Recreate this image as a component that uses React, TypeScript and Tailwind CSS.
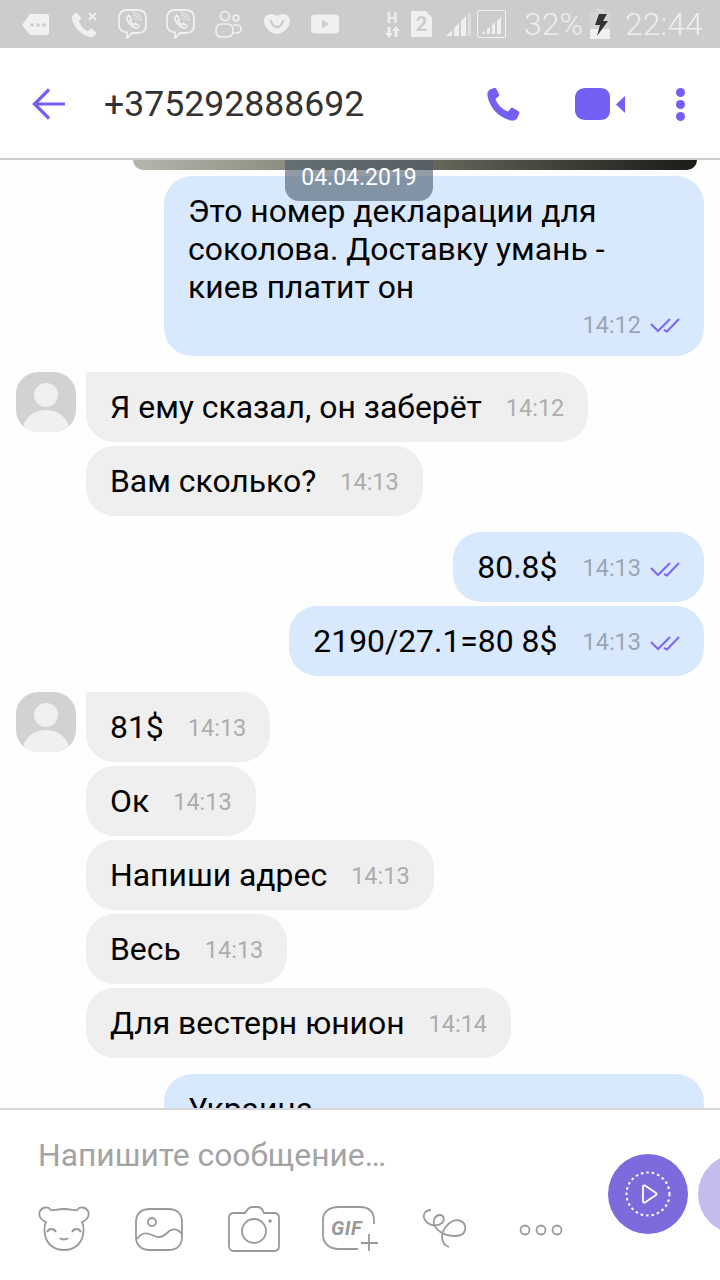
const PURPLE = "#7360f2";

type Msg = { from: "me" | "them"; text: string; time: string; avatar?: boolean; gap?: boolean };

const messages: Msg[] = [
  { from: "them", text: "Я ему сказал, он заберёт", time: "14:12", avatar: true, gap: true },
  { from: "them", text: "Вам сколько?", time: "14:13" },
  { from: "me", text: "80.8$", time: "14:13", gap: true },
  { from: "me", text: "2190/27.1=80 8$", time: "14:13" },
  { from: "them", text: "81$", time: "14:13", avatar: true, gap: true },
  { from: "them", text: "Ок", time: "14:13" },
  { from: "them", text: "Напиши адрес", time: "14:13" },
  { from: "them", text: "Весь", time: "14:13" },
  { from: "them", text: "Для вестерн юнион", time: "14:14" },
];

function Checks() {
  return (
    <svg width="30" height="16" viewBox="0 0 30 16" fill="none" stroke="#8068f4" strokeWidth="2.200" className="shrink-0">
      <path d="M1 7l7 7L20 2" />
      <path d="M14 13l3 1.500L29 2" />
    </svg>
  );
}

function ViberOutline() {
  return (
    <svg width="29" height="30" viewBox="0 0 29 30" fill="none" stroke="#f0f0f0" strokeWidth="1.8">
      <path d="M9 1h11c5 0 8 3 8 8v7c0 5-3 8-8 8h-6l-5 5v-5.500C4 23 1 20 1 16V9c0-5 3-8 8-8z" />
      <path d="M9 8l2-1.500 2.500 3.500-1.500 1.500c.5 2 2 3.500 4 4.500l1.500-1.500 3.500 2.500-1.500 2c-5 .5-11-6-10.500-11z" strokeWidth="1.600" />
      <path d="M15 6c3 0 5.500 2.500 5.500 5.500M15.500 9c1.500 0 2.500 1 2.500 2.500M15 3.500c4.500 0 8 3.500 8 8" strokeWidth="1" />
    </svg>
  );
}

function StatusBar() {
  return (
    <div className="h-12 shrink-0 bg-[#cccccc] flex items-center pl-[22px] text-[#eeeeee]">
      <svg width="27" height="21" viewBox="0 0 27 21" className="shrink-0">
        <path d="M8 0h17a2 2 0 0 1 2 2v17a2 2 0 0 1-2 2H8L0 11z" fill="#f0f0f0" />
        <circle cx="10" cy="11" r="1.800" fill="#cccccc" />
        <circle cx="16" cy="11" r="1.800" fill="#cccccc" />
        <circle cx="22" cy="11" r="1.800" fill="#cccccc" />
      </svg>
      <svg width="27" height="27" viewBox="0 0 27 27" fill="none" className="ml-[22px] shrink-0">
        <path d="M4 2L1 5c-1 9 11 22 21 21l3-3c.5-.5.5-1.500 0-2l-5-3.500-3 2.500c-4-1-8-6-9-10l2.500-2.500L6 2c-.5-.5-1.500-.5-2 0z" fill="#f0f0f0" />
        <path d="M18 2l7 7M25 2l-7 7" stroke="#f0f0f0" strokeWidth="1.800" />
      </svg>
      <div className="ml-[20px] shrink-0 flex"><ViberOutline /></div>
      <div className="ml-[19px] shrink-0 flex"><ViberOutline /></div>
      <svg width="27" height="28" viewBox="0 0 27 28" fill="none" stroke="#f0f0f0" strokeWidth="1.700" className="ml-[20px] shrink-0">
        <circle cx="10" cy="6" r="4.500" />
        <circle cx="21" cy="8" r="2.800" />
        <rect x="1" y="14" width="17" height="13" rx="5.500" />
        <path d="M18 15h4a4 4 0 0 1 4 4v0a4 4 0 0 1-4 4h-4" />
      </svg>
      <svg width="26" height="20" viewBox="0 0 26 20" className="ml-[22px] shrink-0">
        <path d="M7 0c2.500 0 4.500 1 6 2 1.500-1 3.500-2 6-2 4 0 7 3 7 7 0 7-8 13-13 13S0 14 0 7c0-4 3-7 7-7z" fill="#f0f0f0" />
        <path d="M7 7c1 4 3.500 6 6 6s5-2 6-6" fill="none" stroke="#cccccc" strokeWidth="2.400" strokeLinecap="round" />
      </svg>
      <svg width="28" height="20" viewBox="0 0 28 20" className="ml-[21px] shrink-0">
        <rect width="28" height="19" y="0.500" rx="4" fill="#f0f0f0" />
        <path d="M11 5.500l7 4.500-7 4.500z" fill="#cccccc" />
      </svg>
      <div className="ml-[46px] w-[14px] shrink-0 flex flex-col items-center">
        <span className="text-[15px] leading-[15px] font-bold">H</span>
        <svg width="15" height="12" viewBox="0 0 15 12" fill="#f0f0f0">
          <path d="M4 12L0 7h2.500V1h3v6H8zM11 0l4 5h-2.500v6h-3V5H7z" />
        </svg>
      </div>
      <div className="ml-[12px] w-[21px] h-[26px] shrink-0 bg-[#f0f0f0] [clip-path:polygon(0_0,70%_0,100%_25%,100%_100%,0_100%)] flex items-center justify-center text-[#cccccc] text-[20px] font-bold leading-none">
        2
      </div>
      <svg width="25" height="24" viewBox="0 0 25 24" className="ml-[14px] shrink-0">
        <path d="M0 24l6-6v6zM8 16l5-5v13H8zM15 9l5-5v20h-5z" fill="#f0f0f0" />
        <path d="M22 2l3-2v24h-3z" fill="#dddddd" />
      </svg>
      <svg width="29" height="28" viewBox="0 0 29 28" fill="none" className="ml-[6px] shrink-0">
        <rect x="0.500" y="0.500" width="28" height="27" rx="1.500" stroke="#f0f0f0" />
        <path d="M4 24l4-3v3zM10 19l3-2v7h-3zM15 15l3-3v12h-3zM20 11l4-4v17h-4z" fill="#f0f0f0" />
      </svg>
      <span className="ml-[18px] w-[58px] text-[32px] leading-none font-light shrink-0">32%</span>
      <svg width="20" height="30" viewBox="0 0 20 30" className="ml-[8px] shrink-0">
        <path d="M6 0h8v3h6v7H0V3h6z" fill="#d8d8d8" />
        <rect y="10" width="20" height="20" fill="#f0f0f0" />
        <rect y="3" width="20" height="17" fill="#d4d4d4" />
        <path d="M9 5h8l-4 7h5L7 27l3-11H5z" fill="#333333" />
      </svg>
      <span className="ml-[15px] text-[32px] leading-none font-light shrink-0">22:44</span>
    </div>
  );
}

function Header() {
  return (
    <header className="h-[112px] shrink-0 bg-white border-b-2 border-[#cccccc] flex items-center pl-8 pr-[35px] pt-[2px]">
      <svg width="34" height="34" viewBox="0 0 34 34" fill="none" stroke={PURPLE} strokeWidth="3.200" className="shrink-0">
        <path d="M17 2.500L2.500 17 17 31.500M3 17h30" />
      </svg>
      <h1 className="ml-[38px] mt-[2px] text-[35.600px] leading-none text-[#333333] flex-1">+375292888692</h1>
      <svg width="33" height="33" viewBox="0 0 33 33" className="shrink-0">
        <path d="M3 1.500L7 0c1.200-.4 2 .2 2.500 1.200l2.500 5c.4 1 .2 1.800-.6 2.400L8.500 11c1.800 5.500 6.500 10.500 12.500 12.500l2.500-3c.6-.7 1.500-.9 2.400-.4l5.300 2.900c1 .6 1.500 1.500 1 2.600l-1.500 4c-1 2.300-3.500 3.500-6.500 2.900C12 30 2.500 19.500.5 8 0 5 1 2.500 3 1.500z" fill={PURPLE} />
      </svg>
      <svg width="50" height="32" viewBox="0 0 50 32" className="ml-[55px] shrink-0">
        <path d="M11 0h14c7 0 10 4 10 10v12c0 6-3 10-10 10H11C4 32 0 28 0 22V10C0 4 4 0 11 0z" fill={PURPLE} />
        <path d="M50 8v17l-9-8.500z" fill={PURPLE} />
      </svg>
      <div className="ml-[51px] flex flex-col gap-[3px] shrink-0">
        <span className="size-[9px] rounded-full bg-[#7360f2]" />
        <span className="size-[9px] rounded-full bg-[#7360f2]" />
        <span className="size-[9px] rounded-full bg-[#7360f2]" />
      </div>
    </header>
  );
}

function Avatar() {
  return (
    <div className="relative size-[60px] rounded-[22px] bg-[#d2d2d2] overflow-hidden shrink-0">
      <div className="absolute left-[18px] top-[11px] size-[24px] rounded-full bg-[#f0f0f0]" />
      <div className="absolute left-[7px] top-[38px] w-[46px] h-[40px] rounded-[50%] bg-[#f0f0f0]" />
    </div>
  );
}

function Bubble({ m }: { m: Msg }) {
  if (m.from === "me") {
    return (
      <div className={`flex justify-end pr-4 ${m.gap ? "mt-4" : "mt-1"}`}>
        <div className="h-[70px] rounded-[28px] bg-[#d8e9fe] flex items-center px-6 pt-[2px] text-[31.900px]">
          <span className="text-black">{m.text}</span>
          <span className="ml-[25px] mt-[2px] text-[23.500px] text-[#9aa6b2]">{m.time}</span>
          <span className="ml-[9px] mt-[2px] flex"><Checks /></span>
        </div>
      </div>
    );
  }
  return (
    <div className={`flex pl-4 ${m.gap ? "mt-4" : "mt-1"}`}>
      <div className="w-[70px] shrink-0">{m.avatar && <Avatar />}</div>
      <div
        className={`h-[70px] rounded-[28px] bg-[#efefef] flex items-center px-6 pt-[2px] text-[31.900px] ${
          m.avatar ? "rounded-tl-none" : ""
        }`}
      >
        <span className="text-black">{m.text}</span>
        <span className="ml-[24px] mt-[2px] text-[23.500px] text-[#adadad]">{m.time}</span>
      </div>
    </div>
  );
}

function Composer() {
  const stroke = { fill: "none", stroke: "#999999", strokeWidth: 1.8 };
  return (
    <div className="h-[172px] shrink-0 bg-white border-t-2 border-[#d8d8d8] flex overflow-hidden">
      <div className="w-[608px] shrink-0 pl-[38px]">
        <p className="mt-[26px] text-[31.800px] leading-[38px] text-[#a3a3a3]">Напишите сообщение…</p>
        <div className="mt-[32px] flex items-start">
          <svg width="52" height="46" viewBox="0 0 52 46" {...stroke} className="shrink-0">
            <path d="M8 16C3 14 0 10 2 5c2-4 8-5 11-1 3 1 5-1 13-1s10 2 13 1c3-4 9-3 11 1 2 5-1 9-6 11 2 4 2 8 1 13-2 10-10 15-19 15S9 39 7 29c-1-5-1-9 1-13z" />
            <path d="M9 26c2-4 7-4 9 0M34 26c2-4 7-4 9 0M22 32c2 2 6 2 8 0" />
          </svg>
          <svg width="48" height="43" viewBox="0 0 48 43" {...stroke} className="ml-[45px] mt-[2px] shrink-0">
            <path d="M15 1h18c9 0 14 5 14 13v15c0 8-5 13-14 13H15C6 42 1 37 1 29V14C1 6 6 1 15 1z" />
            <circle cx="17" cy="14" r="4" />
            <path d="M2 31c4-6 9-7 15-4s10 3 15-2 10-5 15 1" />
          </svg>
          <svg width="52" height="46" viewBox="0 0 52 46" {...stroke} className="ml-[45px] shrink-0">
            <path d="M6 7h11l3-4c1-1 2-2 4-2h6c2 0 3 1 4 2l2 4h10c3 0 5 2 5 5v28c0 3-2 5-5 5H6c-3 0-5-2-5-5V12c0-3 2-5 5-5z" />
            <circle cx="26" cy="25" r="12" />
            <circle cx="42" cy="15" r="1.800" fill="#999999" stroke="none" />
          </svg>
          <div className="relative w-[56px] h-[46px] ml-[42px] shrink-0">
            <svg width="56" height="46" viewBox="0 0 56 46" {...stroke} className="absolute inset-0">
              <path d="M52 18V14C52 6 47 1 38 1H17C7 1 1 6 1 14v15c0 8 6 14 16 14h19" />
              <path d="M47 28v17M39 37h17" />
            </svg>
            <span className="absolute left-[9px] top-[10px] text-[20px] leading-[24px] italic font-bold text-[#999999] tracking-[0.5px]">GIF</span>
          </div>
          <svg width="46" height="40" viewBox="0 0 46 40" {...stroke} className="ml-[44px] mt-[3px] shrink-0">
            <path d="M9 1C3 1 0 6 3 11c4 6 12 7 17 3 3-3 2-8-2-8-5 0-7 5-6 9 2 7 11 12 21 12 9 0 11-5 10-10-1-5-7-7-12-5-7 3-11 10-11 16 0 5 3 9 7 10" />
          </svg>
          <svg width="44" height="12" viewBox="0 0 44 12" {...stroke} className="ml-[51px] mt-[18px] shrink-0">
            <circle cx="6" cy="6" r="4.500" />
            <circle cx="22" cy="6" r="4.500" />
            <circle cx="38" cy="6" r="4.500" />
          </svg>
        </div>
      </div>
      <div className="mt-[44px] flex gap-[10px] shrink-0">
        <div className="size-20 rounded-full bg-[#7b6bdc] flex items-center justify-center">
          <svg width="46" height="46" viewBox="0 0 46 46" fill="none" stroke="#ffffff">
            <circle cx="23" cy="23" r="21.500" strokeWidth="2" strokeDasharray="2.500 3" />
            <path d="M18 15.500c0-1 1-1.500 2-1l11 7.500c.8.500.8 1.500 0 2l-11 7.500c-1 .5-2 0-2-1z" strokeWidth="1.800" />
          </svg>
        </div>
        <div className="size-20 rounded-full bg-[#c4bcef]" />
      </div>
    </div>
  );
}

export default function App() {
  return (
    <div className="w-[720px] h-[1280px] flex flex-col bg-white overflow-hidden font-[Roboto,sans-serif]">
      <StatusBar />
      <Header />
      <main className="relative flex-1 min-h-0 overflow-hidden bg-[#fefefe]">
        {/* date pill sits over the scrolled content */}
        <div className="absolute left-[285px] top-0 w-[148px] h-[41px] rounded-b-[14px] bg-[#4a5a6a]/60 text-white text-[23px] leading-[35px] text-center">
          04.04.2019
        </div>
        {/* bottom edge of the photo above, scrolled off */}
        <div className="mx-[133px] mr-[23px] h-[10px] rounded-b-[16px] bg-gradient-to-r from-[#b4b8ac] via-[#6c6c60] to-[#1c1c18]" />
        <div className="flex justify-end pr-4 mt-[6px]">
          <div className="w-[540px] h-[180px] rounded-[28px] bg-[#d8e9fe] pt-[16px] px-6 text-[31.900px] leading-[38px]">
            <p className="text-black">Это номер декларации для соколова. Доставку умань - киев платит он</p>
            <div className="mt-[5px] flex items-center justify-end leading-[28px]">
              <span className="text-[23.500px] text-[#9aa6b2]">14:12</span>
              <span className="ml-[9px] flex"><Checks /></span>
            </div>
          </div>
        </div>
        {messages.map((m, i) => (
          <Bubble key={i} m={m} />
        ))}
        <div className="flex justify-end pr-4 mt-4">
          <div className="w-[540px] h-[70px] rounded-t-[28px] bg-[#d8e9fe] pt-[16px] px-6 text-[31.900px] leading-[38px] text-black">
            Украина
          </div>
        </div>
      </main>
      <Composer />
    </div>
  );
}
